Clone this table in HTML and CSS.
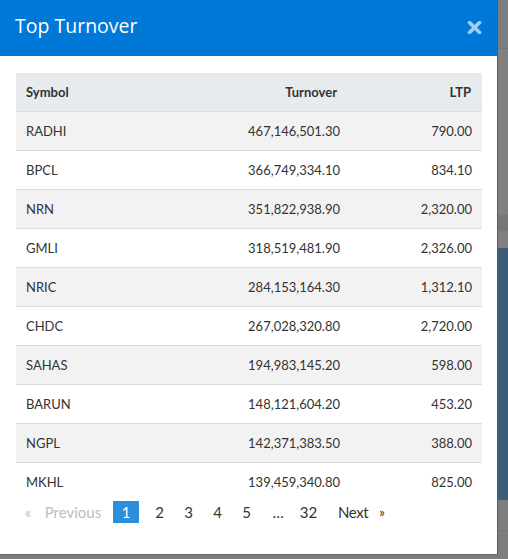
FILE: index.html
```html
<!DOCTYPE html>
<html>
<head>
<meta charset="utf-8">
<link rel="stylesheet" href="styles.css">
</head>
<body>
<div class="modal">
  <div class="modal-header">
    <h4 class="modal-title">Top Turnover</h4>
    <button class="close" aria-label="Close">
      <svg width="15" height="13" viewBox="0 0 15 13"><path d="M2.5 1.5 L12.5 11.5 M12.5 1.5 L2.5 11.5" stroke="currentColor" stroke-width="3.6" stroke-linecap="round"/></svg>
    </button>
  </div>
  <div class="modal-body">
    <table class="table">
      <thead>
        <tr><th class="c-sym">Symbol</th><th class="num">Turnover</th><th class="num c-ltp">LTP</th></tr>
      </thead>
      <tbody>
        <tr><td>RADHI</td><td class="num">467,146,501.30</td><td class="num">790.00</td></tr>
        <tr><td>BPCL</td><td class="num">366,749,334.10</td><td class="num">834.10</td></tr>
        <tr><td>NRN</td><td class="num">351,822,938.90</td><td class="num">2,320.00</td></tr>
        <tr><td>GMLI</td><td class="num">318,519,481.90</td><td class="num">2,326.00</td></tr>
        <tr><td>NRIC</td><td class="num">284,153,164.30</td><td class="num">1,312.10</td></tr>
        <tr><td>CHDC</td><td class="num">267,028,320.80</td><td class="num">2,720.00</td></tr>
        <tr><td>SAHAS</td><td class="num">194,983,145.20</td><td class="num">598.00</td></tr>
        <tr><td>BARUN</td><td class="num">148,121,604.20</td><td class="num">453.20</td></tr>
        <tr><td>NGPL</td><td class="num">142,371,383.50</td><td class="num">388.00</td></tr>
        <tr><td>MKHL</td><td class="num">139,459,340.80</td><td class="num">825.00</td></tr>
      </tbody>
    </table>
    <ul class="pagination">
      <li class="disabled first">«</li>
      <li class="disabled prev">Previous</li>
      <li class="active">1</li>
      <li class="page">2</li>
      <li class="page">3</li>
      <li class="page">4</li>
      <li class="page">5</li>
      <li class="dots">…</li>
      <li class="last">32</li>
      <li class="next">Next</li>
      <li class="arrow">»</li>
    </ul>
  </div>
</div>
</body>
</html>
```
FILE: styles.css
```css
* { box-sizing: border-box; }
html, body { margin: 0; padding: 0; }
body {
  width: 508px;
  height: 559px;
  overflow: hidden;
  background:
    linear-gradient(to bottom,
      #7e7e7e 0, #7e7e7e 48px, #747474 48px, #747474 49px,
      #808080 49px, #808080 215px, #777777 215px, #777777 231px,
      #808080 231px, #808080 248px, #3c5c79 248px, #3c5c79 500px,
      #7e7e7e 500px, #7e7e7e 530px, #767676 530px, #767676 531px,
      #7e7e7e 531px);
  font-family: "Lato", "Open Sans", sans-serif;
}
.modal {
  width: 498px;
  height: 555px;
  background: #fff;
  border-right: 1px solid #5a5a5a;
  border-bottom: 1px solid #6a6a6a;
  display: flex;
  flex-direction: column;
}
.modal-header {
  height: 56px;
  background: #0078d7;
  display: flex;
  align-items: center;
  justify-content: space-between;
  padding: 0 15px 0 15px;
}
.modal-title {
  margin: 0;
  color: #fff;
  font-family: "Open Sans", sans-serif;
  font-weight: 400;
  font-size: 19.5px;
  line-height: 24px;
  margin-top: -5px;
}
.close {
  border: 0;
  background: none;
  padding: 0;
  color: #a3ccef;
  width: 15px;
  height: 13px;
  display: flex;
  margin-top: -2px;
}
.modal-body {
  padding: 17px 16px 0 16px;
}
.table {
  width: 466px;
  border-collapse: collapse;
  font-size: 13px;
  color: #333;
}
.table th, .table td {
  height: 39px;
  padding: 0 10px;
  text-align: left;
  vertical-align: middle;
}
.table th {
  height: 38px;
  background: #e8ebee;
  font-weight: 700;
  color: #333;
}
.table td { border-top: 1px solid #dcdcdc; }
.table tbody tr:nth-child(odd) td { background: #f2f2f2; }
.table .num { text-align: right; }
.table th.num { padding-right: 13px; }
.table th.c-ltp { padding-right: 11px; }
.c-sym { width: 150px; }
.c-ltp { width: 132px; }
.pagination {
  list-style: none;
  margin: 0;
  padding: 0 0 0 2px;
  display: flex;
  align-items: center;
  font-size: 15px;
  color: #333;
}
.pagination li {
  height: 22px;
  line-height: 22px;
  text-align: center;
}
.pagination .disabled { color: #bdbdbd; }
.pagination .first { width: 20px; }
.pagination .prev { width: 70px; margin-right: 5px; }
.pagination .active {
  background: #2b90d9;
  color: #fff;
  width: 26px;
  margin-right: 6px;
}
.pagination .page { width: 29px; }
.pagination .dots { width: 34px; }
.pagination .last { width: 27px; }
.pagination .next { padding-left: 16px; letter-spacing: -0.4px; }
.pagination .arrow { padding-left: 11px; font-size: 13px; }
```
